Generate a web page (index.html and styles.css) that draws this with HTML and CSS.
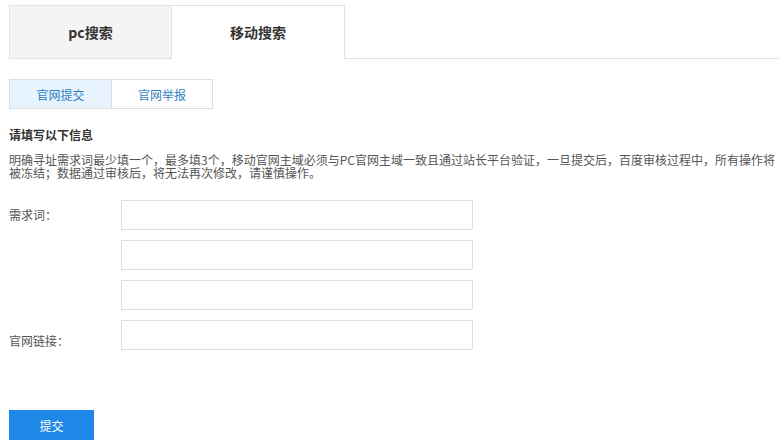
FILE: index.html
```html
<!DOCTYPE html>
<html lang="zh-CN">
<head>
<meta charset="utf-8">
<title>官网提交</title>
<link rel="stylesheet" href="styles.css">
</head>
<body>
<div class="page">
  <div class="tabs">
    <div class="tab">pc搜索</div>
    <div class="tab tab-active">移动搜索</div>
  </div>
  <div class="subtabs">
    <div class="subtab subtab-active">官网提交</div>
    <div class="subtab">官网举报</div>
  </div>
  <h3 class="title">请填写以下信息</h3>
  <p class="desc">明确寻址需求词最少填一个，最多填3个，移动官网主域必须与PC官网主域一致且通过站长平台验证，一旦提交后，百度审核过程中，所有操作将被冻结；数据通过审核后，将无法再次修改，请谨慎操作。</p>
  <div class="form">
    <div class="row">
      <label class="label">需求词：</label>
      <input class="input" type="text">
    </div>
    <div class="row">
      <span class="label"></span>
      <input class="input" type="text">
    </div>
    <div class="row">
      <span class="label"></span>
      <input class="input" type="text">
    </div>
    <div class="row">
      <label class="label label-low">官网链接：</label>
      <input class="input" type="text">
    </div>
  </div>
  <button class="submit" type="button">提交</button>
</div>
</body>
</html>
```
FILE: styles.css
```css
* { box-sizing: border-box; }
html, body { margin: 0; padding: 0; background: #fff; }
body {
  font-family: "Noto Sans CJK SC", "Liberation Sans", sans-serif;
  font-size: 12px;
  color: #555;
}
.page {
  padding: 5px 0 0 9px;
  width: 779px;
}
.tabs {
  display: flex;
  height: 54px;
  border-bottom: 1px solid #e2e2e2;
}
.tab {
  height: 53px;
  border: 1px solid #e2e2e2;
  border-bottom: none;
  background: #f4f4f4;
  width: 163px;
  display: flex;
  align-items: center;
  justify-content: center;
  font-size: 14px;
  font-weight: bold;
  color: #333;
  padding-bottom: 0;
}
.tab-active {
  width: 173px;
  height: 54px;
  border-left: none;
  background: #fff;
  padding-bottom: 1px;
}
.subtabs {
  display: flex;
  width: 204px;
  height: 30px;
  margin-top: 20px;
  border: 1px solid #dedede;
}
.subtab {
  flex: 1;
  display: flex;
  align-items: center;
  justify-content: center;
  color: #2f7fc3;
  font-size: 12px;
}
.subtab-active {
  flex: none;
  width: 102px;
  background: #e8f4fd;
  border-right: 1px solid #dedede;
}
.title {
  margin: 18px 0 0 0;
  font-size: 12px;
  line-height: 16px;
  font-weight: bold;
  color: #333;
}
.desc {
  margin: 10px 0 0 0;
  font-size: 12px;
  line-height: 13px;
  color: #555;
  width: 770px;
}
.form {
  margin-top: 21px;
  display: flex;
  flex-direction: column;
  gap: 10px;
}
.row {
  display: flex;
  align-items: center;
}
.label {
  width: 112px;
  color: #555;
  font-size: 12px;
  line-height: 16px;
}
.label-low { padding-top: 12px; }
.input {
  width: 352px;
  height: 30px;
  margin: 0;
  border: 1px solid #dedede;
  background: #fff;
  outline: none;
}
.submit {
  display: block;
  margin-top: 60px;
  width: 85px;
  height: 30px;
  border: none;
  background: #1e88e8;
  color: #fff;
  font-family: "Noto Sans CJK SC", "Liberation Sans", sans-serif;
  font-size: 12px;
  padding: 0;
}
```
